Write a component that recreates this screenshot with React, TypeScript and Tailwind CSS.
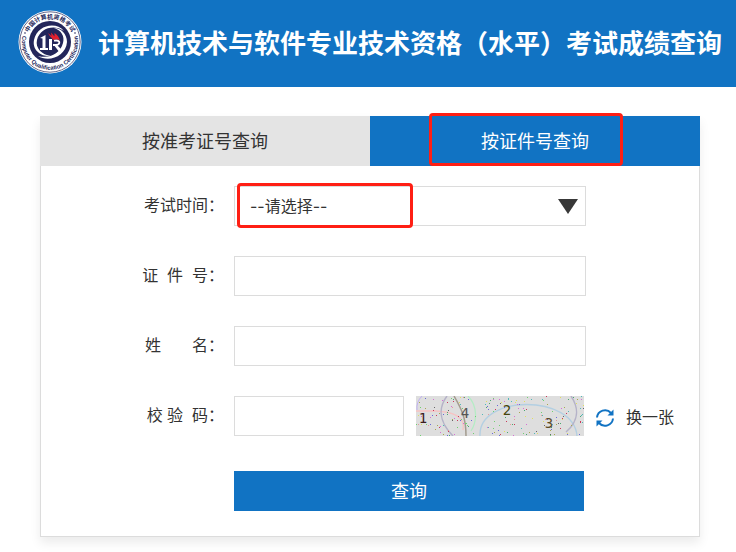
import { useState } from "react";

const NOISE_COLORS = ["#c83a5a", "#4aa870", "#6a6ad8", "#d670d6", "#50b8b8", "#a8a850", "#666666", "#70d070", "#e69a9a", "#e0e060"];

// small deterministic generator so the captcha noise stays stable between renders
function makeNoise(count: number) {
  let seed = 90217;
  const next = () => {
    seed = (seed * 16807) % 2147483647;
    return seed / 2147483647;
  };
  return Array.from({ length: count }, () => ({
    x: Math.floor(next() * 168),
    y: Math.floor(next() * 40),
    color: NOISE_COLORS[Math.floor(next() * NOISE_COLORS.length)],
  }));
}

const noise = makeNoise(190);

function Logo() {
  return (
    <svg viewBox="0 0 64 64" className="h-16 w-16 shrink-0" aria-hidden="true">
      <defs>
        <path id="ring-top" d="M8.5 32 A23.5 23.5 0 0 1 55.5 32" />
        <path id="ring-bottom" d="M4.6 26 A28 28 0 1 0 59.4 26" />
      </defs>
      <circle cx="32" cy="32" r="31.5" fill="#fff" />
      <circle cx="32" cy="32" r="30.2" fill="none" stroke="#23265a" strokeWidth="0.7" />
      <circle cx="32" cy="32" r="21" fill="#23265a" />
      <path d="M46 21 C38 11 19 15 16 30 C14 40 23 47 33 46 C24 45 17 38 19 30 C22 18 36 14 46 21Z" fill="#fff" />
      <path d="M20 46 C31 53 48 46 49 32 C49 24 43 18 36 18 C43 20 47 26 45 33 C42 44 31 49 20 46Z" fill="#fff" />
      <path d="M22 28 L27.5 25 V38 H30 V40 H22 V38 H24.5 V28.5Z" fill="#fff" />
      <path d="M31 29 H34 V40 H31Z M35 34 H38 L45 41 H40.5Z" fill="#fff" />
      <path d="M36 30.5 H39 C42.5 31 42 35 38 35 H35" fill="none" stroke="#fff" strokeWidth="1.8" />
      <path d="M30 23 L33.5 26 L33 22.5 L36.5 26.5 L36.5 23 C40 25 41 28 42 30.5 C39 28.5 38 29 35 30 C34 27.5 31.5 26.5 30 23Z" fill="#e3202e" />
      <text fontSize="6" fontWeight="700" fill="#23265a" fontFamily="'Noto Sans CJK SC', sans-serif" textAnchor="middle">
        <textPath href="#ring-top" startOffset="50%">中国计算机资格考试</textPath>
      </text>
      <text fontSize="5.8" fontWeight="700" fill="#23265a" fontFamily="'Liberation Sans', sans-serif" textAnchor="middle">
        <textPath href="#ring-bottom" startOffset="50%">Computer Qualification Certification</textPath>
      </text>
      <circle cx="7" cy="23" r="0.8" fill="#23265a" />
      <circle cx="57" cy="23" r="0.8" fill="#23265a" />
    </svg>
  );
}

function Captcha() {
  return (
    <svg viewBox="0 0 168 40" className="h-10 w-42 shrink-0 bg-[#dedede]" role="img" aria-label="校验码">
      <g fill="none">
        <path d="M6 0 Q0 6 1 14" stroke="#c0b0f0" />
        <path d="M0 15 H20 C36 16 50 20 47 34" stroke="#f7c3c3" strokeWidth="1.5" />
        <path d="M31 0 C22 12 23 26 37 40" stroke="#b5b2c8" strokeWidth="1.5" />
        <path d="M38 0 C46 14 50 22 50 40" stroke="#a39b8e" strokeWidth="1.5" />
        <path d="M52 0 C62 10 61 26 55 35" stroke="#b4ecc4" strokeWidth="1.2" />
        <path d="M64 40 C62 -2 158 -2 161 40" stroke="#b3cfe2" strokeWidth="1.3" />
        <path d="M155 0 C163 12 163 25 150 36" stroke="#b5b2c8" strokeWidth="1.5" />
      </g>
      {noise.map((dot, i) => (
        <rect key={i} x={dot.x} y={dot.y} width="1" height="1" fill={dot.color} />
      ))}
      <g fontSize="14" fontFamily="'DejaVu Sans Mono', monospace" textAnchor="middle">
        <text x="7" y="27" fill="#3b1d1d">1</text>
        <text x="49" y="22" fill="#555555">4</text>
        <text x="91" y="19" fill="#45450c">2</text>
        <text x="133" y="32" fill="#5a4a26">3</text>
      </g>
    </svg>
  );
}

function RefreshIcon() {
  return (
    <svg viewBox="0 0 18 18" className="h-[18px] w-[18px]" aria-hidden="true">
      <g fill="none" stroke="#1173c3" strokeWidth="2">
        <path d="M1 8.5 A8 8 0 0 1 15 4" />
        <path d="M17 9.5 A8 8 0 0 1 3 14" />
      </g>
      <path d="M17.5 0.5 V6.5 H11.5Z" fill="#1173c3" />
      <path d="M0.5 17.5 V11.5 H6.5Z" fill="#1173c3" />
    </svg>
  );
}

const labelClass = "w-[183px] shrink-0 text-right whitespace-pre leading-10";
const inputClass = "h-10 border border-[#dcdcdc] bg-white px-4 outline-none";

export default function App() {
  const [tab, setTab] = useState("id");
  const [formData, setFormData] = useState({ examTime: "", idNumber: "", name: "", code: "" });

  const handleChange = (e: React.ChangeEvent<HTMLInputElement | HTMLSelectElement>) => {
    setFormData({ ...formData, [e.target.name]: e.target.value });
  };

  const tabClass = (name: string) =>
    tab === name
      ? "relative h-[50px] pt-px text-lg bg-[#1173c3] text-white"
      : "relative h-[50px] pt-px text-lg bg-[#e4e4e4] text-[#333333]";

  return (
    <div
      lang="zh-CN"
      className="bg-white pb-6 font-['Liberation_Sans','Noto_Sans_CJK_SC',sans-serif] text-base text-[#333333]"
    >
      <header className="flex h-[87px] items-start gap-4 bg-[#1173c3] pt-[10px] pl-[18px]">
        <Logo />
        <h1 className="text-[26px] leading-[68px] font-bold whitespace-nowrap text-white">
          计算机技术与软件专业技术资格（水平）考试成绩查询
        </h1>
      </header>

      <main className="mt-[29px] mr-9 ml-10 shadow-[0_6px_10px_rgba(0,0,0,0.08)]">
        <div className="grid grid-cols-2">
          <button type="button" onClick={() => setTab("ticket")} className={tabClass("ticket")}>
            按准考证号查询
          </button>
          <button type="button" onClick={() => setTab("id")} className={tabClass("id")}>
            按证件号查询
            <span className="pointer-events-none absolute -top-[3px] right-[77px] bottom-0 left-[59px] rounded-sm border-3 border-[#ff1f14]" />
          </button>
        </div>

        <form
          onSubmit={(e) => e.preventDefault()}
          className="flex flex-col gap-[30px] border border-t-0 border-[#dcdcdc] pt-5 pb-[25px]"
        >
          <div className="flex gap-[10px]">
            <label htmlFor="examTime" className={labelClass}>考试时间：</label>
            <div className="relative w-[352px]">
              <select
                id="examTime"
                name="examTime"
                value={formData.examTime}
                onChange={handleChange}
                className="h-10 w-full appearance-none border border-[#dcdcdc] bg-white px-[15px] font-['Inter','Noto_Sans_CJK_SC',sans-serif] outline-none"
              >
                <option value="">--请选择--</option>
              </select>
              <svg viewBox="0 0 20 15" className="pointer-events-none absolute top-[13px] right-2 h-[15px] w-5" aria-hidden="true">
                <path d="M0 0 H20 L10 15Z" fill="#383838" />
              </svg>
              <span className="pointer-events-none absolute -top-[3px] -bottom-[2px] left-[3px] w-[176px] rounded-sm border-3 border-[#ff1f14]" />
            </div>
          </div>

          <div className="flex gap-[10px]">
            <label htmlFor="idNumber" className={labelClass}>{"证  件  号："}</label>
            <input id="idNumber" name="idNumber" value={formData.idNumber} onChange={handleChange} className={`${inputClass} w-[352px]`} />
          </div>

          <div className="flex gap-[10px]">
            <label htmlFor="name" className={labelClass}>{"姓       名："}</label>
            <input id="name" name="name" value={formData.name} onChange={handleChange} className={`${inputClass} w-[352px]`} />
          </div>

          <div className="flex gap-[10px]">
            <label htmlFor="code" className={labelClass}>{"校 验  码："}</label>
            <div className="flex items-center gap-3">
              <input id="code" name="code" value={formData.code} onChange={handleChange} className={`${inputClass} w-[170px]`} />
              <Captcha />
              <button type="button" className="flex items-center gap-3 pt-1 whitespace-nowrap">
                <RefreshIcon />
                换一张
              </button>
            </div>
          </div>

          <button type="submit" className="mt-[5px] ml-[193px] h-10 w-[350px] bg-[#1173c3] pt-px text-lg text-white">
            查询
          </button>
        </form>
      </main>
    </div>
  );
}
